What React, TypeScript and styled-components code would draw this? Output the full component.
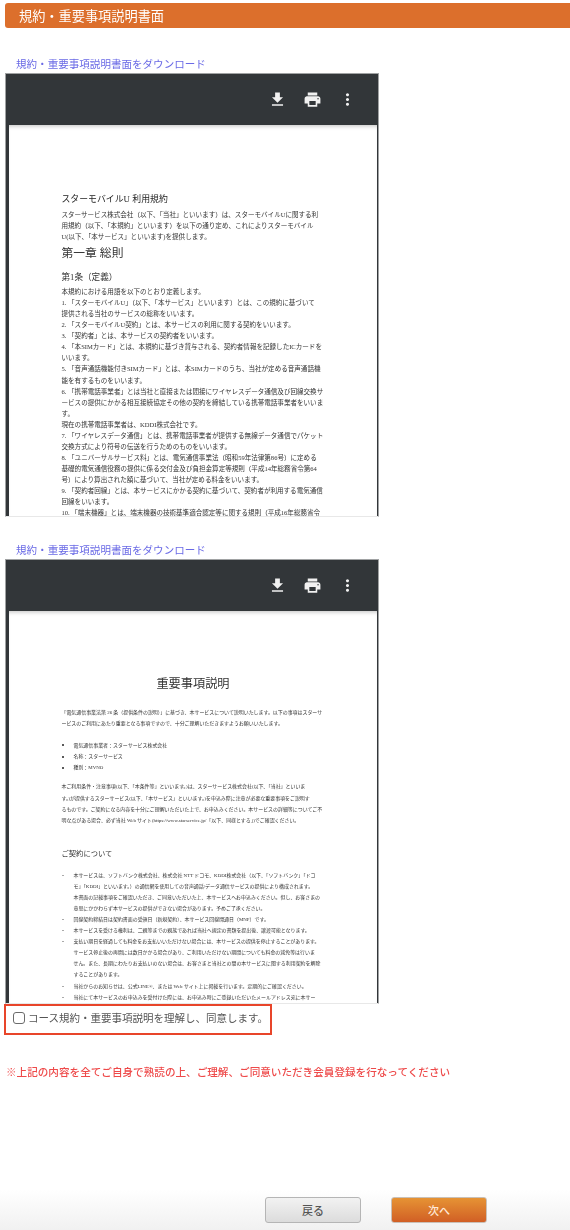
import React from 'react'
import styled, { createGlobalStyle } from 'styled-components'

const Global = createGlobalStyle`
  html, body {
    margin: 0;
    padding: 0;
    background: #fff;
  }
  * {
    box-sizing: border-box;
  }
`

const Page = styled.div`
  width: 570px;
  height: 1230px;
  overflow: hidden;
  padding-top: 3px;
  position: relative;
  font-family: 'Noto Sans CJK JP', 'Liberation Sans', sans-serif;
  filter: blur(0.3px);
`

const SectionBar = styled.h2`
  margin: 0 0 0 5px;
  height: 25px;
  padding-left: 14px;
  background: #dc6f2c;
  border-radius: 3px 0 0 3px;
  color: #fff;
  font-size: 13.2px;
  font-weight: 400;
  line-height: 25px;
`

const DownloadLink = styled.a<{ $top: number }>`
  display: block;
  height: 14px;
  margin: ${p => p.$top}px 0 2px 16px;
  color: #6a6ae6;
  font-size: 10.55px;
  line-height: 14px;
`

const Viewer = styled.div<{ $height: number }>`
  width: 374px;
  height: ${p => p.$height}px;
  margin-left: 5px;
  border: 1.5px solid #a0a2a3;
  border-bottom: 1px solid #e8e8e8;
  background: #323639;
  display: flex;
  flex-direction: column;
  overflow: hidden;
`

const Toolbar = styled.div`
  height: 51px;
  flex: none;
  display: flex;
  align-items: center;
  justify-content: flex-end;
  gap: 16px;
  padding: 0 21.5px 1px 0;
  color: #f1f1f1;
  svg {
    display: block;
    width: 19px;
    height: 19px;
    fill: currentColor;
  }
`

const DocSheet = styled.div`
  flex: 1;
  margin: 0 1.5px 0 3px;
  background: #fff;
  box-shadow: inset 0 4px 4px -3px rgba(0, 0, 0, 0.25);
  overflow: hidden;
  color: #333;
  font-family: 'Liberation Serif', 'Noto Sans CJK JP', serif;
  white-space: nowrap;
`

const TermsBody = styled.div`
  padding: 68px 0 0 52.5px;
`

const TermsTitle = styled.div`
  font-size: 8.9px;
  line-height: 12px;
  color: #222;
  margin-bottom: 4px;
`

const TermsLine = styled.div`
  font-size: 6.55px;
  line-height: 11.05px;
`

const ChapterTitle = styled.div`
  font-size: 11.8px;
  line-height: 16px;
  margin: 3px 0 10px;
`

const ArticleTitle = styled.div`
  font-size: 8.6px;
  line-height: 12px;
  margin-bottom: 3px;
`

const NoticeBody = styled.div`
  padding: 64px 0 0 52.5px;
`

const NoticeTitle = styled.div`
  width: 263px;
  text-align: center;
  font-size: 12.2px;
  line-height: 18px;
  margin-bottom: 14px;
`

const NoticeLine = styled.div<{ $indent?: boolean; $leading?: number }>`
  font-size: 4.95px;
  line-height: ${p => p.$leading ?? 11.35}px;
  padding-left: ${p => (p.$indent ? 12 : 0)}px;
  position: relative;
`

const Marker = styled.span<{ $dash?: boolean }>`
  position: absolute;
  left: 0;
  top: ${p => (p.$dash ? 5 : 4.5)}px;
  width: ${p => (p.$dash ? 2 : 2.2)}px;
  height: ${p => (p.$dash ? 1 : 2.2)}px;
  border-radius: ${p => (p.$dash ? 0 : 50)}%;
  background: ${p => (p.$dash ? '#aaa' : '#222')};
`

const NoticeBlock = styled.div<{ $gap: number }>`
  margin-top: ${p => p.$gap}px;
`

const NoticeHeading = styled.div`
  font-size: 7.3px;
  line-height: 11px;
  margin: 21px 0 11px;
`

const AgreeBox = styled.label`
  display: flex;
  align-items: center;
  gap: 3px;
  width: 268px;
  height: 31px;
  margin: 0 0 0 4px;
  padding: 0 0 4px 7px;
  border: 2px solid #e8452a;
  color: #555;
  font-size: 10.5px;
  line-height: 14px;
`

const AgreeCheck = styled.input`
  appearance: none;
  width: 12px;
  height: 12px;
  margin: 0;
  background: #fff;
  border: 1px solid #6b6b6b;
  border-radius: 3px;
  flex: none;
`

const Warning = styled.p`
  margin: 30px 0 0 6px;
  color: #ee4a4a;
  font-size: 10.6px;
  line-height: 14px;
  font-weight: 500;
  white-space: nowrap;
`

const Footer = styled.div`
  position: absolute;
  left: 0;
  right: 0;
  bottom: 0;
  height: 40px;
  padding-bottom: 7px;
  display: flex;
  align-items: flex-end;
  gap: 30px;
  justify-content: flex-start;
  padding-left: 265px;
  background: linear-gradient(#fff, #f1f1f1);
`

const NavButton = styled.button<{ $primary?: boolean }>`
  width: 96px;
  height: 26px;
  padding: 0;
  border: 1px solid ${p => (p.$primary ? '#c9c0b8' : '#b5b5b5')};
  border-radius: 3px;
  background: ${p =>
    p.$primary
      ? 'linear-gradient(#e69334, #d15f25)'
      : 'linear-gradient(#f2f2f2, #dcdcdc)'};
  color: ${p => (p.$primary ? '#ffe9d8' : '#555')};
  font-family: inherit;
  font-size: 11px;
  font-weight: 500;
`

const DownloadIcon = () => (
  <svg viewBox='0 0 24 24'>
    <path d='M19 9h-4V3H9v6H5l7 7 7-7zM5 18v2h14v-2H5z' />
  </svg>
)

const PrintIcon = () => (
  <svg viewBox='0 0 24 24'>
    <path d='M19 8H5c-1.66 0-3 1.34-3 3v6h4v4h12v-4h4v-6c0-1.66-1.34-3-3-3zm-3 11H8v-5h8v5zm3-7c-.55 0-1-.45-1-1s.45-1 1-1 1 .45 1 1-.45 1-1 1zm-1-9H6v4h12V3z' />
  </svg>
)

const MoreIcon = () => (
  <svg viewBox='0 0 24 24'>
    <path d='M12 8c1.1 0 2-.9 2-2s-.9-2-2-2-2 .9-2 2 .9 2 2 2zm0 2c-1.1 0-2 .9-2 2s.9 2 2 2 2-.9 2-2-.9-2-2-2zm0 6c-1.1 0-2 .9-2 2s.9 2 2 2 2-.9 2-2-.9-2-2-2z' />
  </svg>
)

const introLines = [
  'スターサービス株式会社（以下、「当社」といいます）は、スターモバイルUに関する利',
  '用規約（以下、「本規約」といいます）を以下の通り定め、これによりスターモバイル',
  'U(以下、「本サービス」といいます)を提供します。',
]

const definitionLines = [
  '本規約における用語を以下のとおり定義します。',
  '1. 「スターモバイルU」（以下、「本サービス」といいます）とは、この規約に基づいて',
  '提供される当社のサービスの総称をいいます。',
  '2. 「スターモバイルU契約」とは、本サービスの利用に関する契約をいいます。',
  '3. 「契約者」とは、本サービスの契約者をいいます。',
  '4. 「本SIMカード」とは、本規約に基づき貸与される、契約者情報を記録したICカードを',
  'いいます。',
  '5. 「音声通話機能付きSIMカード」とは、本SIMカードのうち、当社が定める音声通話機',
  '能を有するものをいいます。',
  '6. 「携帯電話事業者」とは当社と直接または間接にワイヤレスデータ通信及び回線交換サ',
  'ービスの提供にかかる相互接続協定その他の契約を締結している携帯電話事業者をいいま',
  'す。',
  '現在の携帯電話事業者は、KDDI株式会社です。',
  '7. 「ワイヤレスデータ通信」とは、携帯電話事業者が提供する無線データ通信でパケット',
  '交換方式により符号の伝送を行うためのものをいいます。',
  '8. 「ユニバーサルサービス料」とは、電気通信事業法（昭和59年法律第86号）に定める',
  '基礎的電気通信役務の提供に係る交付金及び負担金算定等規則（平成14年総務省令第64',
  '号）により算出された額に基づいて、当社が定める料金をいいます。',
  '9. 「契約者回線」とは、本サービスにかかる契約に基づいて、契約者が利用する電気通信',
  '回線をいいます。',
  '10. 「端末機器」とは、端末機器の技術基準適合認定等に関する規則（平成16年総務省令',
]

const noticeIntro = [
  '「電気通信事業法第 26 条（提供条件の説明）」に基づき、本サービスについて説明いたします。以下の事項はスターサ',
  'ービスのご利用にあたり重要となる事項ですので、十分ご理解いただきますようお願いいたします。',
]

const providerLines = [
  '電気通信事業者：スターサービス株式会社',
  '名称：スターサービス',
  '種別：MVNO',
]

const noticeTerms = [
  '本ご利用条件・注意事項(以下、「本条件等」といいます。)は、スターサービス株式会社(以下、「当社」といいま',
  'す。)が提供するスターサービス(以下、「本サービス」といいます。)を申込み際に注意が必要な重要事項をご説明す',
  'るものです。ご契約になる内容を十分にご理解いただいた上で、お申込みください。本サービスの詳細等についてご不',
  '明な点がある場合、必ず当社 Web サイト(https://www.starservice.jp/「以下、同様とする」)でご確認ください。',
]

// dash: list item start, the rest are wrapped lines
const contractLines = [
  { text: '本サービスは、ソフトバンク株式会社、株式会社 NTT ドコモ、KDDI株式会社（以下、「ソフトバンク」「ドコ', dash: true },
  { text: 'モ」「KDDI」といいます。）の通信網を使用しての音声通話/データ通信サービスの提供により構成されます。' },
  { text: '本書面の記載事項をご確認いただき、ご同意いただいた上、本サービスへお申込みください。但し、お客さまの' },
  { text: '意思にかかわらず本サービスの提供ができない場合があります。予めご了承ください。' },
  { text: '回線契約締結日は契約書面の受領日（新規契約）、本サービス回線開通日（MNP）です。', dash: true },
  { text: '本サービスを受ける権利は、二親等までの親族であれば当社へ規定の書類を提出後、譲渡可能となります。', dash: true },
  { text: '支払い期日を経過しても料金をお支払いいただけない場合には、本サービスの提供を停止することがあります。', dash: true },
  { text: 'サービス停止後の再開には数日かかる場合があり、ご利用いただけない期間についても料金の減免等は行いま' },
  { text: 'せん。また、長期にわたりお支払いのない場合は、お客さまと当社との間の本サービスに関する利用契約を解除' },
  { text: 'することがあります。' },
  { text: '当社からのお知らせは、公式LINE®、または Web サイト上に掲載を行います。定期的にご確認ください。', dash: true },
  { text: '当社にて本サービスのお申込みを受付けた際には、お申込み時にご登録いただいたメールアドレス宛に本サー', dash: true },
]

const ViewerToolbar = () => (
  <Toolbar>
    <DownloadIcon />
    <PrintIcon />
    <MoreIcon />
  </Toolbar>
)

export default function App() {
  return (
    <Page>
      <Global />
      <SectionBar>規約・重要事項説明書面</SectionBar>

      <DownloadLink $top={29}>規約・重要事項説明書面をダウンロード</DownloadLink>
      <Viewer $height={444}>
        <ViewerToolbar />
        <DocSheet>
          <TermsBody>
            <TermsTitle>スターモバイルU 利用規約</TermsTitle>
            {introLines.map(l => (
              <TermsLine key={l}>{l}</TermsLine>
            ))}
            <ChapterTitle>第一章 総則</ChapterTitle>
            <ArticleTitle>第1条（定義）</ArticleTitle>
            {definitionLines.map(l => (
              <TermsLine key={l}>{l}</TermsLine>
            ))}
          </TermsBody>
        </DocSheet>
      </Viewer>

      <DownloadLink $top={26}>規約・重要事項説明書面をダウンロード</DownloadLink>
      <Viewer $height={445}>
        <ViewerToolbar />
        <DocSheet>
          <NoticeBody>
            <NoticeTitle>重要事項説明</NoticeTitle>
            {noticeIntro.map(l => (
              <NoticeLine key={l}>{l}</NoticeLine>
            ))}
            <NoticeBlock $gap={10}>
              {providerLines.map(l => (
                <NoticeLine key={l} $indent>
                  <Marker />
                  {l}
                </NoticeLine>
              ))}
            </NoticeBlock>
            <NoticeBlock $gap={7.5}>
              {noticeTerms.map(l => (
                <NoticeLine key={l}>{l}</NoticeLine>
              ))}
            </NoticeBlock>
            <NoticeHeading>ご契約について</NoticeHeading>
            {contractLines.map(l => (
              <NoticeLine key={l.text} $indent $leading={11.1}>
                {l.dash && <Marker $dash />}
                {l.text}
              </NoticeLine>
            ))}
          </NoticeBody>
        </DocSheet>
      </Viewer>

      <AgreeBox>
        <AgreeCheck type='checkbox' />
        コース規約・重要事項説明を理解し、同意します。
      </AgreeBox>

      <Warning>※上記の内容を全てご自身で熟読の上、ご理解、ご同意いただき会員登録を行なってください</Warning>

      <Footer>
        <NavButton>戻る</NavButton>
        <NavButton $primary>次へ</NavButton>
      </Footer>
    </Page>
  )
}
